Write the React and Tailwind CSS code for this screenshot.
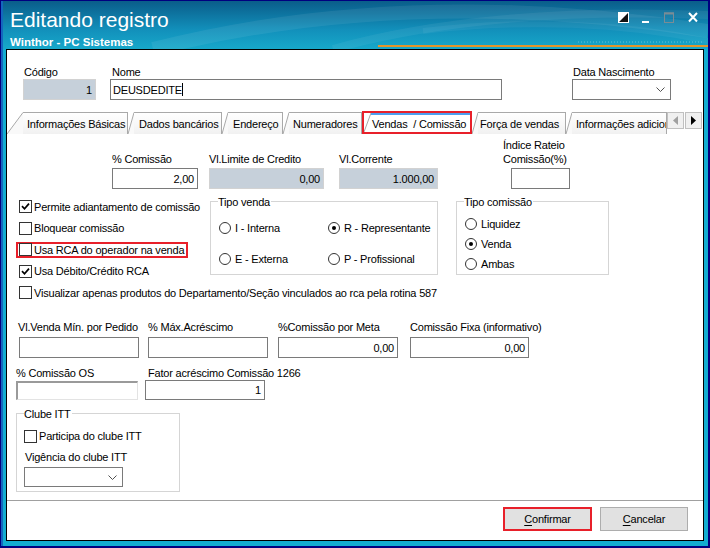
import React from "react";

const ui =
  "font-['Liberation_Sans',Arial,sans-serif] text-[11px] leading-[14px] tracking-[-0.2px] text-black";

function Label({ children, className = "" }) {
  return <div className={`h-[14px] whitespace-nowrap ${className}`}>{children}</div>;
}

function Input({ value, gray, className = "" }) {
  return (
    <div
      className={`flex items-center justify-end pr-[3px] border ${
        gray ? "bg-[#c6d0da] border-[#d2d2d2]" : "bg-white border-[#7a7a7a]"
      } ${className}`}
    >
      {value}
    </div>
  );
}

function Select({ className = "" }) {
  return (
    <div className={`flex items-center justify-end pr-[5px] border border-[#7a7a7a] bg-white ${className}`}>
      <svg width="9" height="5" viewBox="0 0 9 5">
        <path d="M0.5 0.5 L4.5 4.5 L8.5 0.5" fill="none" stroke="#505050" />
      </svg>
    </div>
  );
}

function Check({ checked }) {
  return (
    <span className="w-[13px] h-[13px] shrink-0 border border-[#333] bg-white flex items-center justify-center">
      {checked && (
        <svg width="9" height="9" viewBox="0 0 9 9">
          <path d="M1 4.2 L3.5 6.8 L8 1.6" fill="none" stroke="#000" strokeWidth="1.7" />
        </svg>
      )}
    </span>
  );
}

function Radio({ checked }) {
  return (
    <span className="w-[12px] h-[12px] shrink-0 rounded-full border border-[#333] bg-white flex items-center justify-center">
      {checked && <span className="w-[4px] h-[4px] rounded-full bg-black" />}
    </span>
  );
}

function CheckRow({ checked, highlight, children }) {
  if (highlight) {
    return (
      <div className="h-[21.5px] flex items-center">
        <div className="-ml-[3px] w-[172px] h-[16px] border-2 border-[#e8202a] pl-px flex items-center gap-[2px]">
          <Check checked={checked} />
          <span className="whitespace-nowrap">{children}</span>
        </div>
      </div>
    );
  }
  return (
    <div className="h-[21.5px] flex items-center gap-[2px]">
      <Check checked={checked} />
      <span className="whitespace-nowrap">{children}</span>
    </div>
  );
}

function RadioRow({ checked, children }) {
  return (
    <div className="h-[16px] flex items-center gap-[4px] whitespace-nowrap">
      <Radio checked={checked} />
      {children}
    </div>
  );
}

function Group({ title, className = "", children }) {
  return (
    <div className={`relative border border-[#d5d5d5] ${className}`}>
      <span className="absolute -top-[7px] left-[7px] bg-white pr-px whitespace-nowrap">{title}</span>
      {children}
    </div>
  );
}

function Tab({ slant = 6, width, pad, children, clip }) {
  return (
    <div className="flex h-[22px]">
      <svg width={slant} height="22" className="shrink-0">
        <polygon points={`0,22 ${slant},0 ${slant},22`} fill="#f9f9f9" />
        <line x1="0" y1="22" x2={slant} y2="0.5" stroke="#a9a9a9" />
      </svg>
      <div
        className={`border-t border-r border-[#a9a9a9] bg-[linear-gradient(#ffffff,#f1f1f1)] flex items-center whitespace-nowrap ${width} ${pad} ${
          clip ? "overflow-hidden" : ""
        }`}
      >
        {children}
      </div>
    </div>
  );
}

function TitleBar() {
  return (
    <div className="relative h-[48px] shrink-0 bg-[linear-gradient(180deg,#0a5d8a_0%,#1290bb_60%,#17a8ca_100%)] flex justify-between">
      <svg className="absolute inset-0" width="705" height="48">
        <path d="M150 48 C 300 10, 480 -5, 705 30" fill="none" stroke="#ffffff" strokeOpacity="0.07" strokeWidth="14" />
        <path d="M330 48 C 430 20, 560 8, 705 14" fill="none" stroke="#ffffff" strokeOpacity="0.06" strokeWidth="8" />
        <path d="M420 30 C 520 18, 620 22, 705 40" fill="none" stroke="#ffffff" strokeOpacity="0.05" strokeWidth="6" />
        <line x1="575" y1="41" x2="700" y2="41" stroke="#bfe8f2" strokeOpacity="0.45" strokeDasharray="1 2" />
        <rect x="375" y="44" width="330" height="2" fill="#e3952b" />
      </svg>
      <div className="relative pl-[7px] pt-[7px] text-white font-['Liberation_Sans',Arial,sans-serif]">
        <div className="text-[21px] leading-[24px]">Editando registro</div>
        <div className="mt-[3px] text-[11.5px] leading-[14px] font-bold">Winthor - PC Sistemas</div>
      </div>
      <div className="relative flex items-start mt-[11px] mr-[10px]">
        <svg width="11" height="11" viewBox="0 0 11 11">
          <rect x="0.5" y="0.5" width="10" height="10" fill="#ffffff" stroke="#ffffff" />
          <polygon points="10,1 10,10 1,10" fill="#111" />
        </svg>
        <svg width="7" height="11" className="ml-[13px]">
          <rect x="0" y="9" width="7" height="2" fill="#ffffff" />
        </svg>
        <svg width="10" height="11" className="ml-[15px]">
          <rect x="0.5" y="1" width="9" height="9.5" fill="none" stroke="#7a8c95" />
          <rect x="0" y="0.5" width="10" height="2" fill="#7a8c95" />
        </svg>
        <svg width="10" height="11" className="ml-[14px]">
          <path d="M1 1 L9 9.5 M9 1 L1 9.5" stroke="#ffffff" strokeWidth="2" />
        </svg>
      </div>
    </div>
  );
}

export default function App() {
  return (
    <div className="w-[710px] h-[548px] bg-[#00007f] pt-px pl-px pr-[2px] pb-[2px]">
      <div className="h-full flex flex-col border-l-2 border-[#1466bf] bg-[#12add0]">
        <TitleBar />
        <div className={`flex-1 ml-[3px] mr-[4px] mb-[5px] border border-black bg-white flex flex-col ${ui}`}>
          {/* header */}
          <div className="flex mt-[15px]">
            <div className="ml-[16px] w-[73px]">
              <Label className="pl-[1px]">Código</Label>
              <Input gray value="1" className="h-[21px]" />
            </div>
            <div className="ml-[14px] w-[392px]">
              <Label className="pl-[2px]">Nome</Label>
              <div className="h-[21px] border border-[#7a7a7a] flex items-center pl-[2px]">
                DEUSDEDITE
                <span className="w-px h-[13px] bg-black" />
              </div>
            </div>
            <div className="ml-[70px] w-[99px]">
              <Label className="pl-[1px]">Data Nascimento</Label>
              <Select className="h-[21px]" />
            </div>
          </div>

          {/* tabs */}
          <div className="flex items-end h-[23px] mt-[11px]">
            <Tab slant={16} width="w-[105px]" pad="pl-[4px]">Informações Básicas</Tab>
            <Tab width="w-[88px]" pad="pl-[5px]">Dados bancários</Tab>
            <Tab width="w-[55px]" pad="pl-[5px]">Endereço</Tab>
            <Tab width="w-[73px]" pad="pl-[4px]">Numeradores</Tab>
            <div className="h-[23px] w-[110px] border-2 border-[#e8202a] flex bg-white">
              <svg width="7" height="19" className="shrink-0">
                <line x1="0" y1="19" x2="7" y2="0" stroke="#a9a9a9" />
              </svg>
              <div className="flex-1 border-t-2 border-[#4d9ff0] flex items-center pl-px whitespace-pre">
                Vendas  / Comissão
              </div>
            </div>
            <Tab width="w-[88px]" pad="pl-[2px]">Força de vendas</Tab>
            <Tab width="w-[95px]" pad="pl-[4px]" clip>Informações adicionais</Tab>
            <div className="flex gap-px h-[22px] pb-[5px]">
              <div className="w-[17px] border border-[#c0c0c0] bg-[#f0f0f0] flex items-center justify-center">
                <svg width="5" height="9"><polygon points="5,0 5,9 0,4.5" fill="#a0a0a0" /></svg>
              </div>
              <div className="w-[17px] border border-[#c0c0c0] bg-[#f0f0f0] flex items-center justify-center">
                <svg width="5" height="9"><polygon points="0,0 0,9 5,4.5" fill="#000" /></svg>
              </div>
            </div>
          </div>

          {/* comissao row */}
          <div className="flex items-end mt-[4px]">
            <div className="ml-[105px] w-[86px]">
              <Label>% Comissão</Label>
              <Input value="2,00" className="mt-[2px] h-[21px]" />
            </div>
            <div className="ml-[11px] w-[115px]">
              <Label>Vl.Limite de Credito</Label>
              <Input gray value="0,00" className="mt-[2px] h-[21px]" />
            </div>
            <div className="ml-[15px] w-[99px]">
              <Label>Vl.Corrente</Label>
              <Input gray value="1.000,00" className="mt-[2px] h-[21px]" />
            </div>
            <div className="ml-[65px]">
              <Label>Índice Rateio</Label>
              <Label>Comissão(%)</Label>
              <Input className="mt-[2px] ml-[8px] w-[59px] h-[21px]" />
            </div>
          </div>

          {/* checks + groups */}
          <div className="flex items-start">
            <div className="w-[203px] pl-[12px] pt-[7px]">
              <CheckRow checked>Permite adiantamento de comissão</CheckRow>
              <CheckRow>Bloquear comissão</CheckRow>
              <CheckRow highlight>Usa RCA do operador na venda</CheckRow>
              <CheckRow checked>Usa Débito/Crédito RCA</CheckRow>
            </div>
            <Group title="Tipo venda" className="mt-[12px] w-[228px] h-[74px]">
              <div className="grid grid-cols-[109px_1fr] gap-y-[15px] pl-[8px] pt-[18px]">
                <RadioRow>I - Interna</RadioRow>
                <RadioRow checked>R - Representante</RadioRow>
                <RadioRow>E - Externa</RadioRow>
                <RadioRow>P - Profissional</RadioRow>
              </div>
            </Group>
            <Group title="Tipo comissão" className="ml-[18px] mt-[12px] w-[153px] h-[74px]">
              <div className="flex flex-col gap-[4px] pl-[8px] pt-[14px]">
                <RadioRow>Liquidez</RadioRow>
                <RadioRow checked>Venda</RadioRow>
                <RadioRow>Ambas</RadioRow>
              </div>
            </Group>
          </div>
          <div className="pl-[12px]">
            <CheckRow>Visualizar apenas produtos do Departamento/Seção vinculados ao rca pela rotina 587</CheckRow>
          </div>

          {/* valores */}
          <div className="flex mt-[16.5px]">
            <div className="ml-[12px] w-[120px]">
              <Label className="-ml-[1px]">Vl.Venda Mín. por Pedido</Label>
              <Input className="mt-[3px] h-[21px]" />
            </div>
            <div className="ml-[9px] w-[120px]">
              <Label>% Máx.Acréscimo</Label>
              <Input className="mt-[3px] h-[21px]" />
            </div>
            <div className="ml-[10px] w-[120px]">
              <Label>%Comissão por Meta</Label>
              <Input value="0,00" className="mt-[3px] h-[21px]" />
            </div>
            <div className="ml-[12px] w-[119px]">
              <Label>Comissão Fixa (informativo)</Label>
              <Input value="0,00" className="mt-[3px] h-[21px]" />
            </div>
          </div>

          <div className="flex mt-[8px]">
            <div className="ml-[9px] w-[122px]">
              <Label>% Comissão OS</Label>
              <div className="mt-px h-[19px] border-t-2 border-l-2 border-[#9a9a9a] border-r border-b border-r-[#e3e3e3] border-b-[#e3e3e3] bg-white" />
            </div>
            <div className="ml-[7px] w-[120px]">
              <Label className="pl-[3px]">Fator acréscimo Comissão 1266</Label>
              <Input value="1" className="h-[20px]" />
            </div>
          </div>

          <Group title="Clube ITT" className="ml-[9px] mt-[13px] w-[164px] h-[79px]">
            <div className="pl-[7px] pt-[14px]">
              <div className="h-[16px] flex items-center gap-[2px]">
                <Check />
                <span>Participa do clube ITT</span>
              </div>
              <Label className="mt-[6px] pl-px">Vigência do clube ITT</Label>
              <Select className="mt-[3px] w-[99px] h-[20px]" />
            </div>
          </Group>

          {/* footer */}
          <div className="mt-auto h-[40px] border-t border-[#a0a0a0] flex justify-end items-start gap-[8px] pt-[6px] pr-[15px]">
            <div className="w-[89px] h-[24px] border-2 border-[#e8202a] bg-[#e1e1e1] flex items-center justify-center">
              <span className="underline underline-offset-2">C</span>onfirmar
            </div>
            <div className="w-[88px] h-[24px] border border-[#adadad] bg-[#e1e1e1] flex items-center justify-center">
              <span className="underline underline-offset-2">C</span>ancelar
            </div>
          </div>
        </div>
      </div>
    </div>
  );
}
